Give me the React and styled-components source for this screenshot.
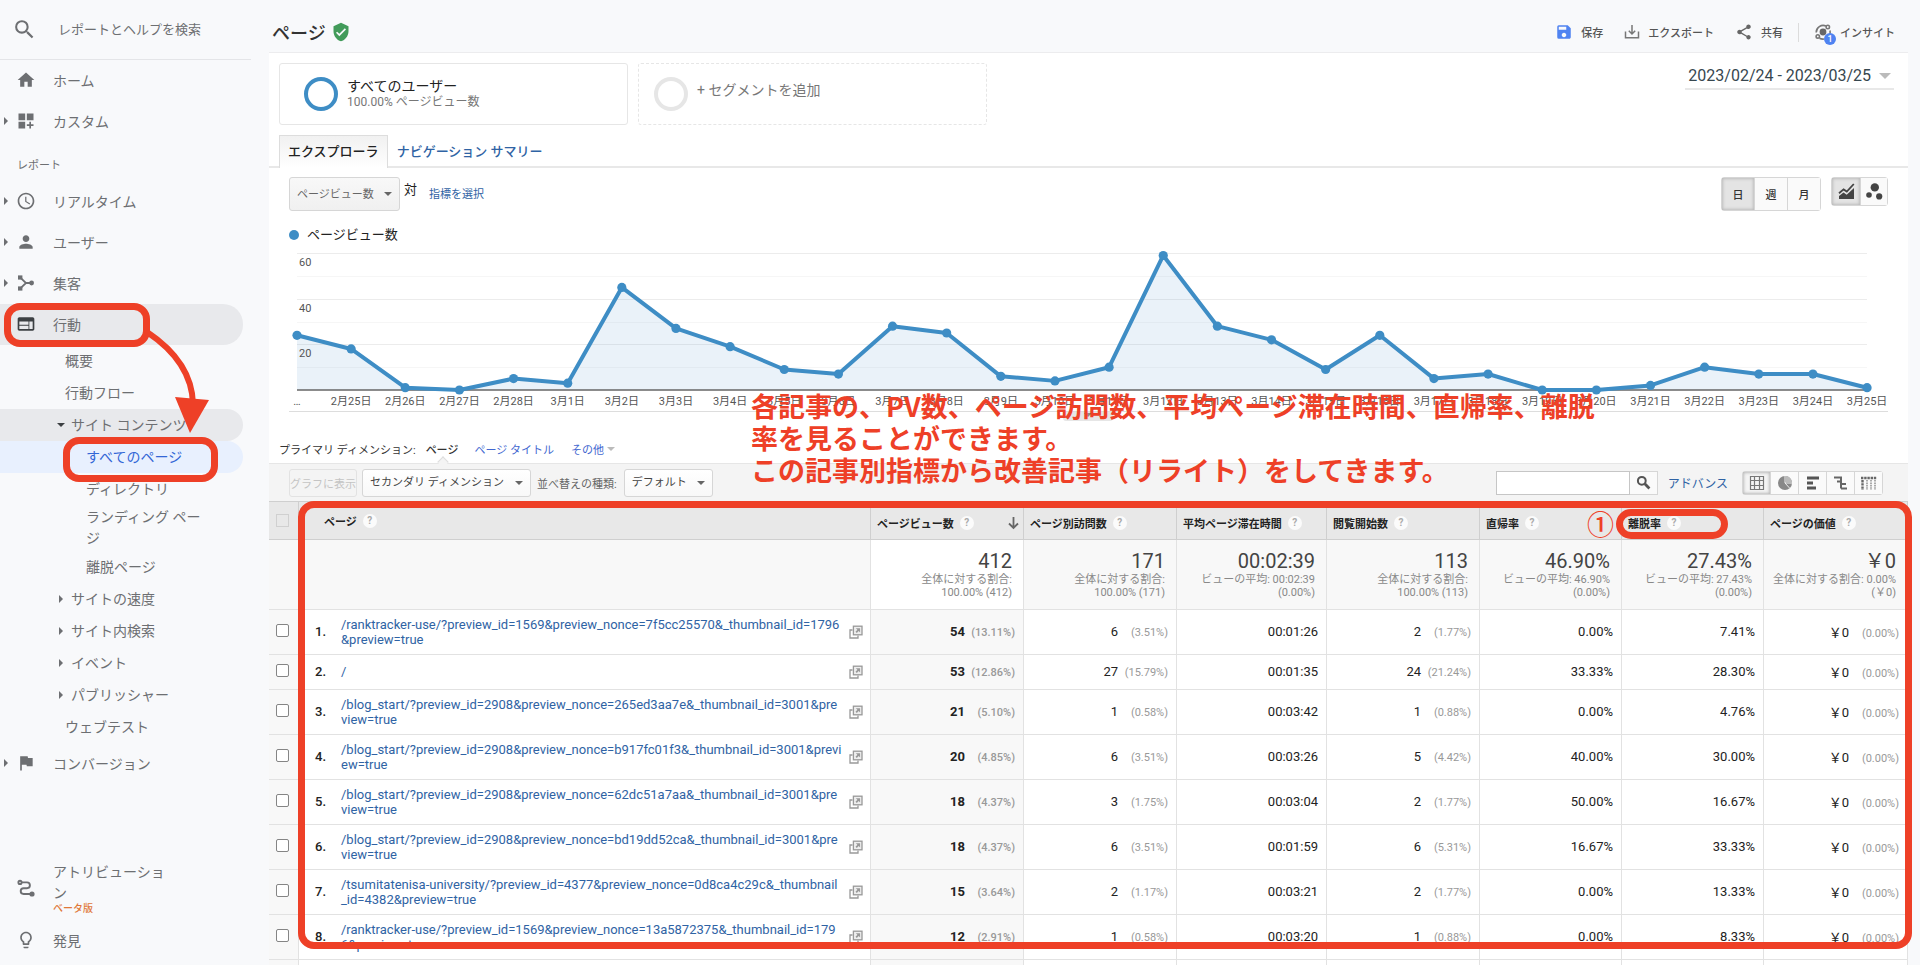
import React, {useState} from 'react';
import styled, {createGlobalStyle, css} from 'styled-components';
import {
    MdSearch, MdHome, MdDashboardCustomize, MdAccessTime, MdPerson, MdWeb, MdFlag,
    MdLightbulbOutline, MdVerifiedUser, MdSave, MdShare
} from 'react-icons/md';

const RED = '#ee4027'
const BLUE = '#3e8dc5'
const LINK = '#2f63a4'

const GlobalStyle = createGlobalStyle`
  * {
    box-sizing: border-box;
  }
  body {
    margin: 0;
    background: #f8f9fb;
    color: #222;
    font-family: Roboto, 'Noto Sans CJK JP', sans-serif;
    font-size: 13px;
  }
  a {
    text-decoration: none;
    color: inherit;
  }
  button, input, select {
    font-family: inherit;
    margin: 0;
  }
  svg {
    display: block;
    flex: none;
  }
`

const Page = styled.div`
  position: relative;
  display: flex;
  height: 100vh;
  overflow: hidden;
`

/* ---------- sidebar ---------- */
const Sidebar = styled.nav`
  flex: none;
  width: 269px;
  display: flex;
  flex-direction: column;
  color: #6d6f72;
  font-size: 14px;
`
const SearchRow = styled.label`
  display: flex;
  align-items: center;
  gap: 21px;
  flex: none;
  width: 251px;
  height: 60px;
  padding-left: 12px;
  border-bottom: 1px solid #e4e5e8;
`
const SearchInput = styled.input`
  width: 170px;
  padding: 0;
  border: none;
  outline: none;
  background: none;
  font-size: 13px;
  &::placeholder {
    color: #6d6f72;
    opacity: 1;
  }
`
const NavLink = styled.a`
  display: flex;
  align-items: center;
  width: 243px;
  height: 41px;
  padding-bottom: 2px;
  border-radius: 0 20px 20px 0;
  background: ${p => p.$open ? '#e8e9ec' : 'none'};
`
const Caret = styled.span`
  width: 16px;
  padding-left: 4px;
  &::before {
    content: '';
    display: ${p => p.$hidden ? 'none' : 'block'};
    width: 0;
    border: 4px solid transparent;
    border-left-color: #6d6f72;
    border-right: none;
  }
`
const NavIcon = styled.span`
  width: 37px;
  font-size: 20px;
  color: ${p => p.$dark ? '#3c4043' : '#6d6f72'};
`
const NavHeading = styled.div`
  height: 39px;
  padding-left: 17px;
  font-size: 11px;
  line-height: 47px;
`
const SubLink = styled.a`
  display: flex;
  align-items: center;
  width: 243px;
  min-height: 32px;
  padding: ${p => p.$tall ? '2px 34px 2px 0' : '0'};
  padding-left: ${p => p.$indent}px;
  border-radius: 0 16px 16px 0;
  line-height: 21px;
  color: ${p => p.$active ? '#3367d6' : 'inherit'};
  background: ${p => p.$active ? '#e8f0fe' : p.$open ? '#e8e9ec' : 'none'};
`
const SubCaret = styled.span`
  width: 15px;
  padding-left: 3px;
  &::before {
    content: '';
    display: block;
    width: 0;
    border: 4px solid transparent;
    border-left-color: #6d6f72;
    border-right: none;
    ${p => p.$open && css`
      margin-left: -2px;
      border: 4px solid transparent;
      border-top-color: #3c4043;
      border-bottom: none;
    `}
  }
`
const NavBottom = styled.div`
  margin-top: auto;
  padding-bottom: 4px;
`
const Attribution = styled.a`
  display: flex;
  align-items: center;
  padding-left: 16px;
  margin-bottom: 6px;
  line-height: 21px;
`
const AttributionText = styled.span`
  width: 114px;
`
const Beta = styled.small`
  display: block;
  font-size: 10px;
  line-height: 10px;
  font-weight: 500;
  color: #e07838;
`

/* ---------- header ---------- */
const Main = styled.main`
  flex: 1;
  min-width: 0;
  margin-right: 12px;
  display: flex;
  flex-direction: column;
`
const TopBar = styled.header`
  display: flex;
  align-items: center;
  justify-content: space-between;
  flex: none;
  height: 52px;
  padding: 12px 13px 0 3px;
`
const Title = styled.h1`
  display: flex;
  align-items: center;
  gap: 5px;
  margin: 0;
  font-size: 18px;
  font-weight: 500;
  color: #333;
`
const Actions = styled.div`
  display: flex;
  align-items: center;
`
const Action = styled.button`
  display: flex;
  align-items: center;
  gap: 8px;
  margin-left: 21px;
  padding: 0;
  border: none;
  background: none;
  font-size: 11px;
  font-weight: 500;
  color: #555;
`
const Separator = styled.span`
  width: 1px;
  height: 19px;
  margin: 0 -6px 0 15px;
  background: #dcdcdc;
`
const InsightIcon = styled.span`
  position: relative;
`
const Badge = styled.span`
  position: absolute;
  right: -4px;
  bottom: -4px;
  width: 12px;
  height: 12px;
  border-radius: 50%;
  background: #4f83f1;
  color: white;
  font-size: 9px;
  line-height: 12px;
`
const Panel = styled.section`
  flex: 1;
  border-top: 1px solid #ececee;
  background: white;
`
const SegmentRow = styled.div`
  display: flex;
  align-items: flex-start;
  gap: 10px;
  padding: 10px 14px 0 10px;
`
const Segment = styled.button`
  display: flex;
  align-items: center;
  gap: 9px;
  width: 349px;
  height: 62px;
  padding: 0 0 0 ${p => p.$empty ? 15 : 24}px;
  border: 1px ${p => p.$empty ? 'dashed' : 'solid'} #e6e6e6;
  border-radius: 3px;
  background: white;
  text-align: left;
  font-size: 14px;
  line-height: 17px;
  color: ${p => p.$empty ? '#777' : '#222'};
`
const SegmentText = styled.span`
  padding-bottom: ${p => p.$raised ? 8 : 1}px;
`
const Ring = styled.span`
  flex: none;
  width: 34px;
  height: 34px;
  border: 4px solid ${p => p.$color};
  border-radius: 50%;
`
const SegmentNote = styled.small`
  display: block;
  font-size: 12px;
  line-height: 15px;
  color: #777;
`
const DateButton = styled.button`
  display: flex;
  align-items: center;
  gap: 8px;
  height: 27px;
  margin-left: auto;
  padding: 0 3px;
  border: none;
  border-bottom: 2px solid #e8e8e8;
  background: none;
  font-size: 16px;
  color: #37474f;
`
const Triangle = styled.span`
  width: 0;
  border: ${p => p.$size}px solid transparent;
  border-top-color: ${p => p.$color || '#666'};
  border-bottom: none;
`
const Tabs = styled.div`
  display: flex;
  margin-top: 10px;
  padding-left: 10px;
  border-bottom: 2px solid #e8e8e8;
`
const Tab = styled.a`
  height: 33px;
  margin-bottom: -2px;
  padding: 0 8px;
  border: 1px solid ${p => p.$active ? '#ddd' : 'transparent'};
  border-bottom: none;
  background: ${p => p.$active ? 'linear-gradient(#f1f1f1, white)' : 'none'};
  font-size: 13px;
  font-weight: 500;
  line-height: 32px;
  color: ${p => p.$active ? '#222' : LINK};
`

/* ---------- chart ---------- */
const ChartTools = styled.div`
  display: flex;
  align-items: flex-start;
  height: 43px;
  padding: 9px 20px 0 20px;
  line-height: 36px;
`
const SelectBox = styled.span`
  position: relative;
  display: inline-flex;
  align-items: center;
  height: ${p => p.$h}px;
`
const Select = styled.select`
  appearance: none;
  height: 100%;
  padding: 0 25px 0 7px;
  border: 1px solid #d6d6d6;
  border-radius: 3px;
  background: linear-gradient(${p => p.$light ? 'white, #f8f8f8' : '#f8f8f8, #f0f0f0'});
  font-size: 11px;
  color: ${p => p.$light ? '#444' : '#666'};
`
const SelectArrow = styled(Triangle)`
  position: absolute;
  right: 8px;
  pointer-events: none;
`
const Versus = styled.span`
  margin: 0 12px 0 4px;
  line-height: 26px;
`
const SmallLink = styled.a`
  font-size: ${p => p.$size || 11}px;
  color: ${p => p.$color || LINK};
`
const ButtonGroup = styled.div`
  display: flex;
  margin-left: ${p => p.$gap};
  border: 1px solid #d6d6d6;
  border-radius: 3px;
`
const GroupButton = styled.button`
  display: flex;
  align-items: center;
  justify-content: center;
  width: ${p => p.$w}px;
  height: ${p => p.$h}px;
  padding: 0;
  border: none;
  border-left: ${p => p.$first ? 'none' : '1px solid #d6d6d6'};
  background: ${p => p.$on ? p.$light ? '#f4f4f4' : '#e4e4e4' : '#fafafa'};
  box-shadow: ${p => p.$on ? 'inset 0 0 3px 1px #bbb' : 'none'};
  font-size: 11px;
  font-weight: 500;
  color: #333;
`
const Legend = styled.div`
  display: flex;
  align-items: center;
  gap: 8px;
  margin-top: 14px;
  padding-left: 20px;
  line-height: 20px;
  &::before {
    content: '';
    width: 10px;
    height: 10px;
    border-radius: 50%;
    background: ${BLUE};
  }
`
const ChartSvg = styled.svg`
  width: calc(100% - 40px);
  margin-left: 20px;
  font-size: 11px;
  overflow: visible;
`

/* ---------- table ---------- */
const DimensionRow = styled.div`
  display: flex;
  align-items: center;
  height: 28px;
  margin-top: 14px;
  padding-left: 10px;
  font-size: 11px;
  color: #333;
`
const CurrentDimension = styled.strong`
  position: relative;
  margin: 0 16px 0 10px;
  font-weight: 500;
  &::after {
    content: '';
    position: absolute;
    top: 17px;
    left: 13px;
    width: 7px;
    height: 7px;
    border: 1px solid #ddd;
    border-right: none;
    border-bottom: none;
    background: #f4f4f4;
    transform: rotate(45deg);
  }
`
const MoreButton = styled.button`
  display: flex;
  align-items: center;
  gap: 3px;
  margin-left: 17px;
  padding: 0;
  border: none;
  background: none;
  font-size: 11px;
  color: #4267d0;
`
const Toolbar = styled.div`
  display: flex;
  align-items: center;
  height: 38px;
  padding: 0 25px 0 20px;
  border-top: 1px solid #e6e6e6;
  background: #f4f4f4;
  font-size: 11px;
  color: #666;
`
const PlotButton = styled.button`
  height: 28px;
  margin-right: 5px;
  padding: 0;
  border: 1px solid #e2e2e2;
  border-radius: 3px;
  background: none;
  font-size: 11px;
  color: #c4c4c4;
`
const SortLabel = styled.label`
  margin: 0 7px 0 6px;
`
const FilterForm = styled.form`
  display: flex;
  margin: 0 10px 0 auto;
`
const FilterInput = styled.input`
  width: 134px;
  height: 24px;
  border: 1px solid #c6c6c6;
  outline: none;
`
const FilterButton = styled.button`
  display: flex;
  align-items: center;
  justify-content: center;
  width: 28px;
  padding: 0;
  border: 1px solid #d6d6d6;
  border-left: none;
  background: #fafafa;
  color: #555;
`
const Table = styled.table`
  width: 100%;
  table-layout: fixed;
  border-collapse: separate;
  border-spacing: 0;
`
const Col = styled.col`
  width: ${p => p.$w};
`
const Th = styled.th`
  height: 39px;
  padding: 4px 4px 0 6px;
  border: 0 solid #cfcfcf;
  border-width: 1px 1px 1px 0;
  background: #e8e8e8;
  text-align: left;
  font-size: 11px;
  font-weight: 700;
  color: #222;
  &:first-child {
    padding: 4px 0 0;
  }
  &:nth-child(2) {
    padding: 0 0 0 25px;
  }
`
const HeadInner = styled.span`
  display: flex;
  align-items: center;
  gap: 6px;
  white-space: nowrap;
`
const Help = styled.span`
  width: 14px;
  height: 14px;
  border-radius: 50%;
  background: #fbfbfb;
  font-size: 10px;
  line-height: 14px;
  text-align: center;
  color: #aaa;
`
const SortArrow = styled.svg`
  margin-left: auto;
`
const Td = styled.td`
  height: ${p => p.$h || 35}px;
  padding: 0 8px 2px;
  border: 0 solid #e2e2e2;
  border-width: 0 1px 1px 0;
  background: ${p => p.$shade ? '#f8f8f8' : 'white'};
  text-align: right;
  white-space: nowrap;
`
const CheckCell = styled(Td)`
  padding: 0;
  text-align: center;
  background: #f8f8f8;
`
const Checkbox = styled.input`
  appearance: none;
  display: block;
  width: 13px;
  height: 13px;
  margin: -4px auto 0 7px;
  border: 1px solid ${p => p.disabled ? '#d0d0d0' : '#858585'};
  border-radius: ${p => p.disabled ? 0 : 2}px;
  background: ${p => p.disabled ? 'none' : 'white'};
  &:checked {
    background: ${BLUE};
  }
`
const PageCell = styled(Td)`
  padding: 0 7px 1px 16px;
  text-align: left;
  white-space: normal;
`
const PageInner = styled.div`
  display: flex;
  align-items: center;
  font-weight: 500;
`
const Index = styled.span`
  width: 26px;
`
const PageLink = styled.a`
  flex: 1;
  margin-right: 2px;
  font-size: 13px;
  font-weight: 400;
  line-height: 15px;
  color: ${LINK};
`
const Total = styled.div`
  padding-right: 3px;
  font-size: 20px;
  line-height: 24px;
  color: #444;
`
const TotalNote = styled.div`
  padding-right: 3px;
  font-size: 11px;
  line-height: 13px;
  color: #888;
`
const Value = styled.span`
  font-weight: ${p => p.$bold ? 700 : 400};
`
const Share = styled.small`
  display: inline-block;
  width: 50px;
  font-size: 11px;
  font-weight: ${p => p.$bold ? 500 : 400};
  color: #999;
`

/* ---------- hand-drawn notes over the page ---------- */
const Mark = styled.div`
  position: absolute;
  left: ${p => p.$x}px;
  top: ${p => p.$y}px;
  width: ${p => p.$w};
  height: ${p => p.$h}px;
  border: 7px solid ${RED};
  border-radius: 16px;
  pointer-events: none;
`
const MarkArrow = styled.svg`
  position: absolute;
  left: 140px;
  top: 320px;
  pointer-events: none;
`
const Note = styled.p`
  position: absolute;
  left: 751px;
  top: 390px;
  margin: 0;
  font-family: 'Noto Sans CJK JP', sans-serif;
  font-size: 27px;
  font-weight: 700;
  line-height: 32px;
  white-space: nowrap;
  color: ${RED};
`
const NoteNumber = styled.span`
  position: absolute;
  left: 1587px;
  top: 508px;
  font-family: 'Noto Sans CJK JP', sans-serif;
  font-size: 27px;
  font-weight: 500;
  line-height: 32px;
  color: ${RED};
`

const AcquisitionIcon = () => (
    <svg width="20" height="20" viewBox="0 0 20 20" fill="currentColor">
        <path d="M3.8 4.2 10 10 3.8 15.8M10 10h6" fill="none" stroke="currentColor" strokeWidth="1.8"/>
        <rect x="2" y="2.4" width="4.4" height="4.2"/>
        <rect x="2" y="13.4" width="4.4" height="4.2"/>
        <circle cx="15.6" cy="10" r="2.4"/>
    </svg>
)

const AttributionIcon = () => (
    <svg width="20" height="20" viewBox="0 0 20 20" fill="none" stroke="currentColor" strokeWidth="1.9">
        <circle cx="4" cy="4.4" r="1.6"/>
        <path d="M5.6 4.4H11a2.9 2.9 0 0 1 0 5.8H7.6a2.9 2.9 0 0 0 0 5.8H14"/>
        <circle cx="16" cy="16" r="2.6" fill="currentColor" stroke="none"/>
    </svg>
)

const ExportIcon = () => (
    <svg width="16" height="16" viewBox="0 0 16 16" fill="none" stroke="#777" strokeWidth="1.5">
        <path d="M1.5 7.5v6.2h13V7.5M8 1v8.6M4.8 6.8 8 10l3.2-3.2"/>
    </svg>
)

const InsightsIcon = () => (
    <svg width="18" height="18" viewBox="0 0 18 18" fill="none" stroke="#777" strokeWidth="1.6">
        <path d="M2.2 9.5A7 7 0 0 1 12 3M16 7.5a7 7 0 0 1-.5 4.5M5.5 15.2A7 7 0 0 0 10 16"/>
        <circle cx="13.8" cy="4" r="1.7"/>
        <circle cx="3.8" cy="13.4" r="1.7"/>
        <circle cx="9" cy="9" r="3.4" fill="#666" stroke="none"/>
    </svg>
)

const LineViewIcon = () => (
    <svg width="17" height="17" viewBox="0 0 17 17" fill="#444">
        <path d="M1 16v-3l4.5-3.6 3.2 2.3L16 5v11z"/>
        <path d="M1 10.2 5.6 6.4l3.2 2.2L15.8 1" fill="none" stroke="#444" strokeWidth="1.8"/>
    </svg>
)

const MotionViewIcon = () => (
    <svg width="17" height="17" viewBox="0 0 17 17" fill="#444">
        <circle cx="8.8" cy="4.4" r="4.2"/>
        <circle cx="3" cy="12" r="2.8"/>
        <circle cx="13.2" cy="13.4" r="3.1"/>
    </svg>
)

const FilterIcon = () => (
    <svg width="15" height="15" viewBox="0 0 15 15" fill="none" stroke="#555">
        <circle cx="5.8" cy="5.8" r="3.9" strokeWidth="2"/>
        <path d="m8.800 8.800 4.600 4.600" strokeWidth="2.8"/>
    </svg>
)

const CompareIcon = () => (
    <svg width="14" height="14" viewBox="0 0 14 14" fill="#999">
        <path d="M3.5 5H1v8h8v-2.6" fill="none" stroke="#999" strokeWidth="1.3"/>
        <rect x="4.4" y="1.2" width="8.6" height="8.6" fill="#eee" stroke="#999" strokeWidth="1.3"/>
        <path d="M6.8 3.2h4.3v4.3L9.7 6.1 7.8 8 6.5 6.7l1.9-1.9z"/>
    </svg>
)

const viewIcons = [
    {
        name: '表', icon: (
            <path d="M1.500 1.500h13v13h-13zM1.500 5.500h13M1.500 10.500h13M5.500 1.500v13M10.500 1.500v13"
                  fill="none" stroke="#777" strokeWidth="1.2"/>
        )
    },
    {
        name: '円グラフ', icon: (
            <g>
                <circle cx="8" cy="8" r="7" fill="#888"/>
                <path d="M9 1v6h6a6.5 6.5 0 0 0-6-6z" fill="#bbb"/>
                <path d="M8 1v7h7M8 8l4.5 5" fill="none" stroke="#eee"/>
            </g>
        )
    },
    {name: '棒グラフ', icon: <path d="M2 1.5h12v3H2zM2 6.5h6v3H2zM2 11.5h9v3H2z" fill="#555"/>},
    {
        name: '比較', icon: (
            <path d="M1 2.500h8M8 1.500v12M4 6.500h4M8 9h5M8 13.500h6" fill="none" stroke="#666" strokeWidth="2"/>
        )
    },
    {
        name: 'ピボット', icon: (
            <g fill="none" stroke="#666" strokeWidth="2.4" strokeDasharray="2.4 0.8">
                <path d="M0 3h16M1.500 5v10"/>
                <path d="M6 5v10M10 5v10M14 5v10" stroke="#888" strokeWidth="1.4" strokeDasharray="1.6 0.8"/>
            </g>
        )
    }
]

const visits = [24, 18, 1, 0, 5, 3, 45, 27, 19, 9, 7, 28, 25, 6, 4, 10, 59, 28, 22, 9, 24, 5, 7, 0, 0, 2, 10, 7, 7, 1]

const dayLabel = (i) => {
    if (i === 0) return '…'
    return i < 5 ? `2月${24 + i}日` : `3月${i - 4}日`
}

const Chart = () => {
    const base = 145
    const points = visits.map((v, i) => [8 + i * 54.14, base - v * 2.28])
    const line = points.map(p => p.join(',')).join(' ')
    return (
        <ChartSvg viewBox="0 0 1599 176" role="img" aria-label="ページビュー数">
            {[10, 20, 30, 40, 50, 60].map((v) => (
                <path key={v} d={`M8 ${Math.round(base - v * 2.28)}.5H1578`} stroke={v % 20 ? '#f6f6f6' : '#ececec'}/>
            ))}
            <polygon points={`8,${base} ${line} 1578,${base}`} fill={BLUE} fillOpacity="0.11"/>
            <path d={`M8 ${base}H1578`} stroke="#666" strokeWidth="1.5"/>
            <polyline points={line} fill="none" stroke={BLUE} strokeWidth="4" strokeLinejoin="round"/>
            {points.map(([x, y], i) => <circle key={i} cx={x} cy={y} r="4.6" fill={BLUE}/>)}
            {[20, 40, 60].map((v) => (
                <text key={v} x="10" y={base + 13 - v * 2.28} fill="#555">{v}</text>
            ))}
            {points.map(([x], i) => (
                <text key={i} x={x} y="160" textAnchor="middle" fill="#555">{dayLabel(i)}</text>
            ))}
            <path d="M0 166.500H1599" stroke="#ddd"/>
            <path d="M774 167h50v6a3 3 0 0 1-3 3h-44a3 3 0 0 1-3-3z" fill="#e6e6e6"/>
            <path d="M795 168h8l-4 4z" fill="#888"/>
        </ChartSvg>
    )
}

const totals = [
    ['412', '全体に対する割合:', '100.00% (412)'],
    ['171', '全体に対する割合:', '100.00% (171)'],
    ['00:02:39', 'ビューの平均: 00:02:39', '(0.00%)'],
    ['113', '全体に対する割合:', '100.00% (113)'],
    ['46.90%', 'ビューの平均: 46.90%', '(0.00%)'],
    ['27.43%', 'ビューの平均: 27.43%', '(0.00%)'],
    ['￥0', '全体に対する割合: 0.00%', '(￥0)']
]

// page, views, share, unique, share, time, entrances, share, bounce, exit
const rows = [
    [['/ranktracker-use/?preview_id=1569&preview_nonce=7f5cc25570&_thumbnail_id=1796', '&preview=true'], '54', '13.11', '6', '3.51', '00:01:26', '2', '1.77', '0.00', '7.41'],
    [['/'], '53', '12.86', '27', '15.79', '00:01:35', '24', '21.24', '33.33', '28.30'],
    [['/blog_start/?preview_id=2908&preview_nonce=265ed3aa7e&_thumbnail_id=3001&pre', 'view=true'], '21', '5.10', '1', '0.58', '00:03:42', '1', '0.88', '0.00', '4.76'],
    [['/blog_start/?preview_id=2908&preview_nonce=b917fc01f3&_thumbnail_id=3001&previ', 'ew=true'], '20', '4.85', '6', '3.51', '00:03:26', '5', '4.42', '40.00', '30.00'],
    [['/blog_start/?preview_id=2908&preview_nonce=62dc51a7aa&_thumbnail_id=3001&pre', 'view=true'], '18', '4.37', '3', '1.75', '00:03:04', '2', '1.77', '50.00', '16.67'],
    [['/blog_start/?preview_id=2908&preview_nonce=bd19dd52ca&_thumbnail_id=3001&pre', 'view=true'], '18', '4.37', '6', '3.51', '00:01:59', '6', '5.31', '16.67', '33.33'],
    [['/tsumitatenisa-university/?preview_id=4377&preview_nonce=0d8ca4c29c&_thumbnail', '_id=4382&preview=true'], '15', '3.64', '2', '1.17', '00:03:21', '2', '1.77', '0.00', '13.33'],
    [['/ranktracker-use/?preview_id=1569&preview_nonce=13a5872375&_thumbnail_id=179', '6&preview=true'], '12', '2.91', '1', '0.58', '00:03:20', '1', '0.88', '0.00', '8.33']
]

const headings = ['ページビュー数', 'ページ別訪問数', '平均ページ滞在時間', '閲覧開始数', '直帰率', '離脱率', 'ページの価値']

const ShareCell = ({value, share, bold}) => (
    <Td $shade={bold}>
        <Value $bold={bold}>{value}</Value>
        <Share $bold={bold}>({share}%)</Share>
    </Td>
)

const ReportTable = () => (
    <Table>
        <colgroup>
            <Col $w="30px"/>
            <Col $w="auto"/>
            <Col $w="153px"/>
            <Col $w="153px"/>
            <Col $w="150px"/>
            <Col $w="153px"/>
            <Col $w="142px"/>
            <Col $w="142px"/>
            <Col $w="144px"/>
        </colgroup>
        <thead>
        <tr>
            <Th><Checkbox type="checkbox" disabled aria-label="すべて選択"/></Th>
            <Th><HeadInner>ページ<Help>?</Help></HeadInner></Th>
            {headings.map((text, i) => (
                <Th key={text}>
                    <HeadInner>
                        {text}<Help>?</Help>
                        {i === 0 && (
                            <SortArrow width="11" height="14" viewBox="0 0 11 14" fill="none" stroke="#666" strokeWidth="1.8">
                                <path d="M5.500 1v11M1 7.500l4.500 4.500L10 7.500"/>
                            </SortArrow>
                        )}
                    </HeadInner>
                </Th>
            ))}
        </tr>
        </thead>
        <tbody>
        <tr>
            <CheckCell $h={70}/>
            <Td $shade/>
            {totals.map(([total, ...notes], i) => (
                <Td key={i} $shade={i > 0}>
                    <Total>{total}</Total>
                    {notes.map((note) => <TotalNote key={note}>{note}</TotalNote>)}
                </Td>
            ))}
        </tr>
        {rows.map(([path, views, viewShare, unique, uniqueShare, time, entrances, entranceShare, bounce, exit], i) => (
            <tr key={i}>
                <CheckCell $h={path.length > 1 ? 45 : 35}>
                    <Checkbox type="checkbox" aria-label={`${i + 1}`}/>
                </CheckCell>
                <PageCell>
                    <PageInner>
                        <Index>{i + 1}.</Index>
                        <PageLink href="#">{path[0]}{path[1] && <br/>}{path[1]}</PageLink>
                        <CompareIcon/>
                    </PageInner>
                </PageCell>
                <ShareCell value={views} share={viewShare} bold/>
                <ShareCell value={unique} share={uniqueShare}/>
                <Td>{time}</Td>
                <ShareCell value={entrances} share={entranceShare}/>
                <Td>{bounce}%</Td>
                <Td>{exit}%</Td>
                <ShareCell value="￥0" share="0.00"/>
            </tr>
        ))}
        <tr>
            <CheckCell/>
            {[...headings, ''].map((h, i) => <Td key={i} $shade={i === 1}/>)}
        </tr>
        </tbody>
    </Table>
)

const NavItem = ({icon, text, caret = true, open}) => (
    <NavLink href="#" $open={open}>
        <Caret $hidden={!caret}/>
        <NavIcon $dark={open}>{icon}</NavIcon>
        {text}
    </NavLink>
)

const Navigation = () => (
    <Sidebar>
        <SearchRow>
            <MdSearch size={25}/>
            <SearchInput type="search" placeholder="レポートとヘルプを検索"/>
        </SearchRow>
        <NavItem icon={<MdHome/>} text="ホーム" caret={false}/>
        <NavItem icon={<MdDashboardCustomize/>} text="カスタム"/>
        <NavHeading>レポート</NavHeading>
        <NavItem icon={<MdAccessTime/>} text="リアルタイム"/>
        <NavItem icon={<MdPerson/>} text="ユーザー"/>
        <NavItem icon={<AcquisitionIcon/>} text="集客"/>
        <NavItem icon={<MdWeb/>} text="行動" open/>
        <SubLink href="#" $indent={65}>概要</SubLink>
        <SubLink href="#" $indent={65}>行動フロー</SubLink>
        <SubLink href="#" $indent={56} $open><SubCaret $open/>サイト コンテンツ</SubLink>
        <SubLink href="#" $indent={86} $active>すべてのページ</SubLink>
        <SubLink href="#" $indent={86}>ディレクトリ</SubLink>
        <SubLink href="#" $indent={86} $tall>ランディング ページ</SubLink>
        <SubLink href="#" $indent={86}>離脱ページ</SubLink>
        {['サイトの速度', 'サイト内検索', 'イベント', 'パブリッシャー'].map((text) => (
            <SubLink key={text} href="#" $indent={56}><SubCaret/>{text}</SubLink>
        ))}
        <SubLink href="#" $indent={65}>ウェブテスト</SubLink>
        <NavItem icon={<MdFlag/>} text="コンバージョン"/>
        <NavBottom>
            <Attribution href="#">
                <NavIcon><AttributionIcon/></NavIcon>
                <AttributionText>アトリビューション<Beta>ベータ版</Beta></AttributionText>
            </Attribution>
            <NavItem icon={<MdLightbulbOutline/>} text="発見" caret={false}/>
        </NavBottom>
    </Sidebar>
)

const App = () => {
    const [range, setRange] = useState('日')
    return (
        <Page>
            <GlobalStyle/>
            <Navigation/>
            <Main>
                <TopBar>
                    <Title>ページ<MdVerifiedUser size={20} color="#429b5a"/></Title>
                    <Actions>
                        <Action><MdSave size={18} color="#4f83f1"/>保存</Action>
                        <Action><ExportIcon/>エクスポート</Action>
                        <Action><MdShare size={18} color="#666"/>共有</Action>
                        <Separator/>
                        <Action><InsightIcon><InsightsIcon/><Badge>1</Badge></InsightIcon>インサイト</Action>
                    </Actions>
                </TopBar>
                <Panel>
                    <SegmentRow>
                        <Segment>
                            <Ring $color={BLUE}/>
                            <SegmentText>すべてのユーザー<SegmentNote>100.00% ページビュー数</SegmentNote></SegmentText>
                        </Segment>
                        <Segment $empty>
                            <Ring $color="#e6e6e6"/>
                            <SegmentText $raised>+ セグメントを追加</SegmentText>
                        </Segment>
                        <DateButton>2023/02/24 - 2023/03/25<Triangle $size={6} $color="#bbb"/></DateButton>
                    </SegmentRow>
                    <Tabs>
                        <Tab href="#" $active>エクスプローラ</Tab>
                        <Tab href="#">ナビゲーション サマリー</Tab>
                    </Tabs>
                    <ChartTools>
                        <SelectBox $h={34}>
                            <Select aria-label="指標"><option>ページビュー数</option></Select>
                            <SelectArrow $size={4}/>
                        </SelectBox>
                        <Versus>対</Versus>
                        <SmallLink href="#">指標を選択</SmallLink>
                        <ButtonGroup $gap="auto">
                            {['日', '週', '月'].map((text, i) => (
                                <GroupButton key={text} $w={i ? 33 : 32} $h={32} $first={i === 0} $on={range === text}
                                             onClick={() => setRange(text)}>{text}</GroupButton>
                            ))}
                        </ButtonGroup>
                        <ButtonGroup $gap="10px">
                            <GroupButton $w={28} $h={27} $first $on aria-label="折れ線グラフ"><LineViewIcon/></GroupButton>
                            <GroupButton $w={27} $h={27} aria-label="モーション グラフ"><MotionViewIcon/></GroupButton>
                        </ButtonGroup>
                    </ChartTools>
                    <Legend>ページビュー数</Legend>
                    <Chart/>
                    <DimensionRow>
                        プライマリ ディメンション:
                        <CurrentDimension>ページ</CurrentDimension>
                        <SmallLink href="#" $color="#4267d0">ページ タイトル</SmallLink>
                        <MoreButton>その他<Triangle $size={4} $color="#bbb"/></MoreButton>
                    </DimensionRow>
                    <Toolbar>
                        <PlotButton disabled>グラフに表示</PlotButton>
                        <SelectBox $h={28}>
                            <Select $light aria-label="セカンダリ ディメンション"><option>セカンダリ ディメンション</option></Select>
                            <SelectArrow $size={4}/>
                        </SelectBox>
                        <SortLabel htmlFor="sort">並べ替えの種類:</SortLabel>
                        <SelectBox $h={28}>
                            <Select $light id="sort"><option>デフォルト</option></Select>
                            <SelectArrow $size={4}/>
                        </SelectBox>
                        <FilterForm>
                            <FilterInput type="text" aria-label="検索"/>
                            <FilterButton type="button" aria-label="検索"><FilterIcon/></FilterButton>
                        </FilterForm>
                        <SmallLink href="#" $size={12}>アドバンス</SmallLink>
                        <ButtonGroup $gap="14px">
                            {viewIcons.map(({name, icon}, i) => (
                                <GroupButton key={name} $w={i ? 28 : 27} $h={22} $first={i === 0} $on={i === 0} $light
                                             aria-label={name}>
                                    <svg width="16" height="16" viewBox="0 0 16 16">{icon}</svg>
                                </GroupButton>
                            ))}
                        </ButtonGroup>
                    </Toolbar>
                    <ReportTable/>
                </Panel>
            </Main>
            <Mark $x={4} $y={303} $w="146px" $h={44}/>
            <Mark $x={63} $y={437} $w="155px" $h={45}/>
            <MarkArrow width="72" height="116" viewBox="0 0 72 116">
                <path d="M7 12Q52 42 53 84" fill="none" stroke={RED} strokeWidth="6"/>
                <path d="M35 77 69 80 50 113z" fill={RED}/>
            </MarkArrow>
            <Mark $x={298} $y={501} $w="calc(100% - 306px)" $h={448}/>
            <Mark $x={1616} $y={509} $w="112px" $h={30}/>
            <NoteNumber>①</NoteNumber>
            <Note>
                各記事の、PV数、ページ訪問数、平均ページ滞在時間、直帰率、離脱<br/>
                率を見ることができます。<br/>
                この記事別指標から改善記事（リライト）をしてきます。
            </Note>
        </Page>
    )
}

export default App;
